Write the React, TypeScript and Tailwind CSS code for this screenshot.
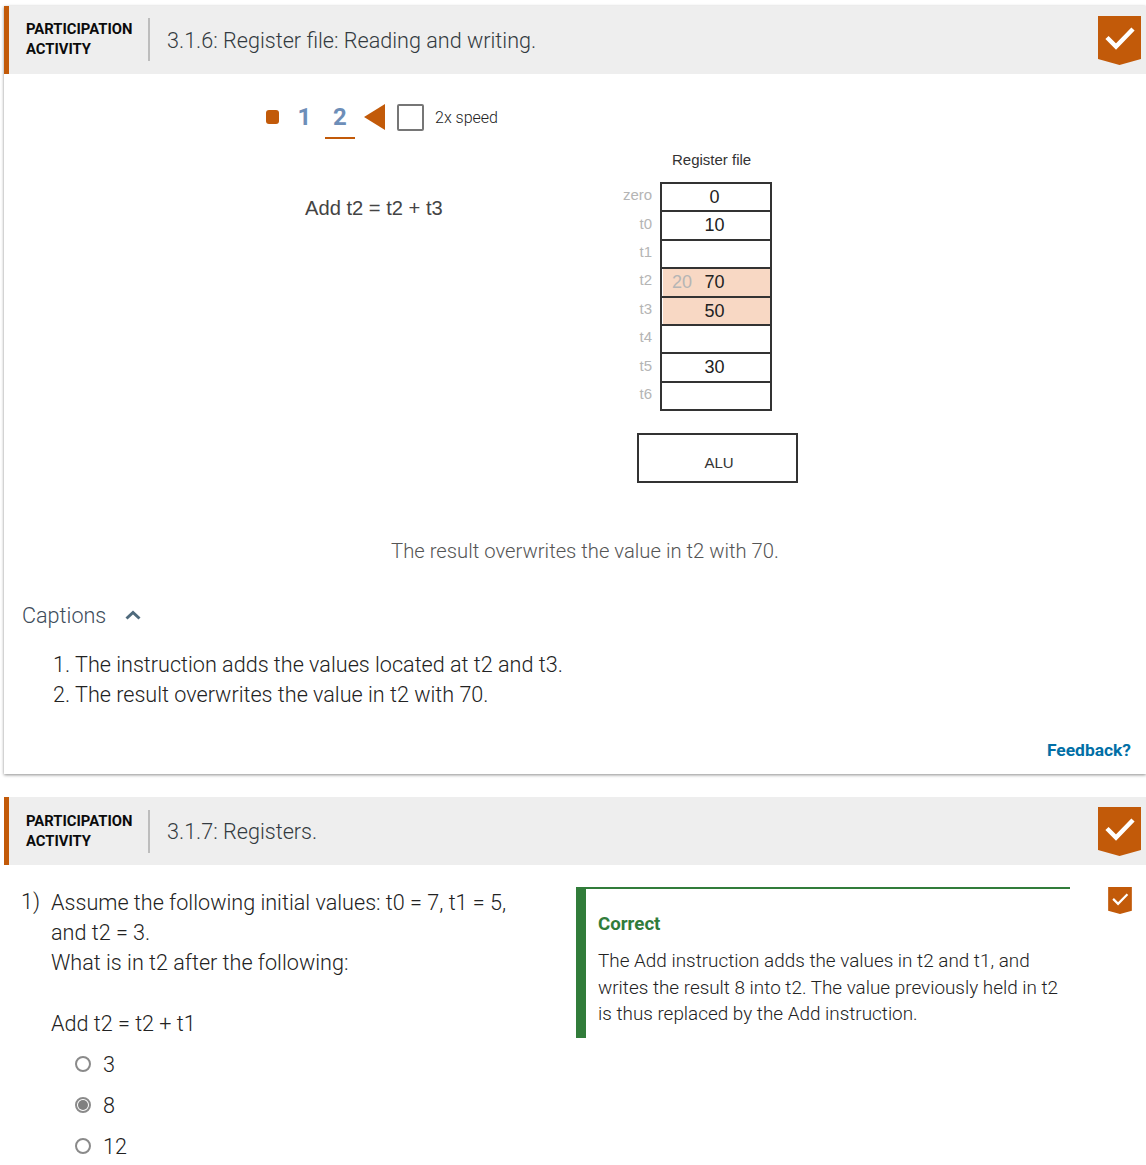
import React from "react";

const ORANGE = "#c25a09";

function Badge({ small }: { small?: boolean }) {
  const w = small ? 24 : 43;
  const h = small ? 27 : 49;
  return (
    <svg width={w} height={h} viewBox="0 0 43 49" className="block shrink-0">
      <path d="M0 0H43V43L21.5 49L0 43Z" fill={ORANGE} />
      <path d="M9 21.5L18 30.5L35 13" fill="none" stroke="#fff" strokeWidth={small ? 4 : 4.5} />
    </svg>
  );
}

function Header({ title, up }: { title: string; up?: boolean }) {
  return (
    <div className="h-[68px] bg-[#eeeeee] border-l-[5px] border-[#c25a09] flex items-center pl-[17px] pr-[5px]">
      <div className={`w-[122px] text-[14.8px] font-bold leading-[20px] text-[#0b0b0b] h-[43px] flex flex-col justify-center ${up ? "-mt-[2px]" : ""}`}>
        <div>PARTICIPATION</div>
        <div>ACTIVITY</div>
      </div>
      <div className={`w-[2px] h-[43px] bg-[#bdbdbd] ${up ? "-mt-[2px]" : ""}`} />
      <div className="ml-[17px] mt-[2px] text-[21.6px] font-light text-[#333a40] flex-1">{title}</div>
      <div className="self-start mt-[10px]">
        <Badge />
      </div>
    </div>
  );
}

const rows: { label: string; value: string; old?: string; hi?: boolean }[] = [
  { label: "zero", value: "0" },
  { label: "t0", value: "10" },
  { label: "t1", value: "" },
  { label: "t2", value: "70", old: "20", hi: true },
  { label: "t3", value: "50", hi: true },
  { label: "t4", value: "" },
  { label: "t5", value: "30" },
  { label: "t6", value: "" },
];

function Register() {
  return (
    <div className="w-[175px] font-['Liberation_Sans',sans-serif]">
      <div className="pl-[49px] text-[15px] leading-[18px] text-[#333]">Register file</div>
      <div className="flex mt-[13px]">
        <div className="w-[29px] mr-[8px] pt-[0.2px] text-right text-[15px] text-[#b5b5b5]">
          {rows.map((r) => (
            <div key={r.label} className="h-[28.4px] leading-[26px]">{r.label}</div>
          ))}
        </div>
        <div className="w-[112px] border-2 border-[#333] border-b-0">
          {rows.map((r) => (
            <div key={r.label} className="h-[28.4px] border-b-[2px] border-[#333] pl-[1px]">
              <div className={`relative h-full text-center text-[18px] leading-[27.6px] pr-[4px] text-[#222] ${r.hi ? "bg-[#f8d8c4]" : ""}`}>
                {r.old && <span className="absolute left-[9px] text-[#b5b5b5]">{r.old}</span>}
                {r.value}
              </div>
            </div>
          ))}
        </div>
      </div>
    </div>
  );
}

function Radio({ label, checked }: { label: string; checked?: boolean }) {
  return (
    <div className="flex items-center h-[41px]">
      <div className="w-[16px] h-[16px] rounded-full border-2 border-[#8a8a8a] flex items-center justify-center">
        {checked && <div className="w-[10px] h-[10px] rounded-full bg-[#808080]" />}
      </div>
      <span className="ml-[12px] mt-[2px] text-[21.6px] font-light text-[#222]">{label}</span>
    </div>
  );
}

export default function App() {
  return (
    <div className="h-[1165px] overflow-hidden bg-white pt-[6px] pl-[4px] font-['Roboto',sans-serif]">
      <section className="h-[768px] bg-white shadow-[0_1px_3px_rgba(0,0,0,0.45)] flex flex-col">
        <Header up title="3.1.6: Register file: Reading and writing." />
        <div className="flex items-center h-[35px] mt-[25px] pl-[262px]">
          <div className="w-[13px] h-[14px] rounded-[3px] bg-[#c25a09]" />
          <div className="ml-[8px] w-[35px] text-center text-[24px] font-bold text-[#6d8eb8]">1</div>
          <div className="relative ml-[3px] w-[30px] text-center text-[24px] font-bold text-[#6d8eb8]">
            2
            <div className="absolute left-0 w-[30px] top-[38px] h-[2px] bg-[#c25a09]" />
          </div>
          <svg width="21" height="26" viewBox="0 0 21 26" className="ml-[9px]"><path d="M0 13L21 0V26Z" fill="#c25a09" /></svg>
          <div className="ml-[12px] mt-[2px] w-[27px] h-[27px] rounded-[2px] border-2 border-[#767676]" />
          <span className="ml-[11px] mt-[2px] text-[16px] font-light text-[#222]">2x speed</span>
        </div>
        <div className="flex mt-[17px]">
          <div className="w-[318px] ml-[301px] mt-[43px] font-['Liberation_Sans',sans-serif] text-[20.15px] leading-[28px] text-[#444]">Add t2 = t2 + t3</div>
          <Register />
        </div>
        <div className="ml-[633px] mt-[22px] w-[161px] h-[50px] border-2 border-[#333] flex items-end justify-center pb-[9px] pl-[3px] font-['Liberation_Sans',sans-serif] text-[15px] leading-[18px] text-[#333]">ALU</div>
        <div className="mt-[54px] text-center text-[20.25px] leading-[28px] font-light text-[#555] pl-[20px]">The result overwrites the value in t2 with 70.</div>
        <div className="flex items-center mt-[36px] pl-[18px] h-[30px]">
          <span className="text-[21.6px] font-light text-[#3d4c5a]">Captions</span>
          <svg width="16" height="10" viewBox="0 0 16 10" className="ml-[19px] -mt-[2px]"><path d="M1.5 8.5L8 2.5L14.5 8.5" fill="none" stroke="#4f6a7c" strokeWidth="3" /></svg>
        </div>
        <ol className="mt-[19px] pl-[49px] text-[21.6px] leading-[30px] font-light text-[#222]">
          <li>1. The instruction adds the values located at t2 and t3.</li>
          <li>2. The result overwrites the value in t2 with 70.</li>
        </ol>
        <div className="mt-[27px] pr-[15px] text-right text-[17.4px] leading-[26px] font-bold text-[#016fa6]">Feedback?</div>
      </section>
      <section className="mt-[23px] h-[400px]">
        <Header title="3.1.7: Registers." />
        <div className="flex mt-[22px]">
          <div className="w-[572px] flex">
            <div className="w-[47px] pl-[17px] text-[21.6px] leading-[30px] font-light text-[#222]">1)</div>
            <div className="mt-[1px] text-[21.6px] leading-[30px] font-light text-[#222]">
              <div>Assume the following initial values: t0 = 7, t1 = 5,</div>
              <div>and t2 = 3.</div>
              <div>What is in t2 after the following:</div>
              <div className="mt-[31px]">Add t2 = t2 + t1</div>
              <div className="ml-[24px] mt-[4px]">
                <Radio label="3" />
                <Radio label="8" checked />
                <Radio label="12" />
              </div>
            </div>
          </div>
          <div className="w-[494px] h-[151px] border-t-2 border-l-[10px] border-[#317c3a] pl-[12px] pt-[22px]">
            <div className="text-[18.7px] leading-[26px] font-bold text-[#317c3a]">Correct</div>
            <div className="mt-[11px] text-[18.9px] leading-[26.5px] font-light text-[#222] w-[470px]">
              The Add instruction adds the values in t2 and t1, and writes the result 8 into t2. The value previously held in t2 is thus replaced by the Add instruction.
            </div>
          </div>
          <div className="ml-[38px]"><Badge small /></div>
        </div>
      </section>
    </div>
  );
}
